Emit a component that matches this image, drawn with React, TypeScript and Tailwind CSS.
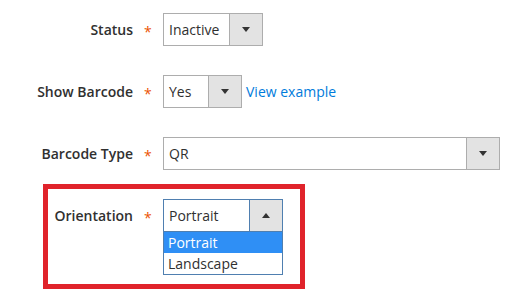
import React from "react";

function Arrow({ up }: { up?: boolean }) {
  return up ? (
    <div className="w-0 h-0 border-l-[4px] border-r-[4px] border-b-[5px] border-l-transparent border-r-transparent border-b-[#333333]" />
  ) : (
    <div className="w-0 h-0 border-l-[4px] border-r-[4px] border-t-[5px] border-l-transparent border-r-transparent border-t-[#333333]" />
  );
}

function Select({
  value,
  widthClass,
  blue,
  up,
}: {
  value: string;
  widthClass: string;
  blue?: boolean;
  up?: boolean;
}) {
  return (
    <div
      className={`flex h-[33px] border bg-white ${widthClass} ${
        blue ? "border-[#4f7fb0]" : "border-[#adadad]"
      }`}
    >
      <div className="flex-1 flex items-center pl-[5px] text-[14px] text-[#303030]">
        {value}
      </div>
      <div
        className={`w-[33px] flex items-center justify-center bg-[#e3e3e3] border-l ${
          blue ? "border-[#4f7fb0]" : "border-[#adadad]"
        }`}
      >
        <Arrow up={up} />
      </div>
    </div>
  );
}

function Label({ text, widthClass }: { text: string; widthClass: string }) {
  return (
    <div className={`flex items-center h-[33px] ${widthClass}`}>
      <div className="flex-1 text-right text-[14px] font-semibold text-[#303030]">
        {text}
      </div>
    </div>
  );
}

function Star() {
  return (
    <div className="ml-[11px] mr-[12px] w-[7px] h-[33px] flex items-center text-[14px] text-[#eb5202] leading-none pt-[5px]">
      *
    </div>
  );
}

export default function App() {
  return (
    <div
      className="w-[531px] h-[297px] bg-white overflow-hidden pt-[13px]"
      style={{ fontFamily: '"Open Sans", "Liberation Sans", sans-serif' }}
    >
      <div className="flex items-start">
        <Label text="Status" widthClass="w-[133px]" />
        <Star />
        <Select value="Inactive" widthClass="w-[100px]" />
      </div>
      <div className="flex items-start mt-[29px]">
        <Label text="Show Barcode" widthClass="w-[133px]" />
        <Star />
        <Select value="Yes" widthClass="w-[79px]" />
        <div className="h-[33px] flex items-center ml-[4px] text-[14px] text-[#007bdb]">
          View example
        </div>
      </div>
      <div className="flex items-start mt-[29px]">
        <Label text="Barcode Type" widthClass="w-[133px]" />
        <Star />
        <Select value="QR" widthClass="w-[337px]" />
      </div>
      <div className="ml-[43px] mt-[14px] w-[262px] border-[5px] border-[#e0232b] pt-[10px] pb-[9px]">
        <div className="flex items-start">
          <Label text="Orientation" widthClass="w-[85px]" />
          <Star />
          <div className="flex flex-col w-[120px]">
            <Select value="Portrait" widthClass="w-[120px]" blue up />
            <div className="border border-t-0 border-[#4f7fb0] bg-white">
              <div className="h-[21px] flex items-center pl-[4px] bg-[#2f8ff5] text-white text-[14px]">
                Portrait
              </div>
              <div className="h-[21px] flex items-center pl-[4px] text-[#303030] text-[14px]">
                Landscape
              </div>
            </div>
          </div>
        </div>
      </div>
    </div>
  );
}
